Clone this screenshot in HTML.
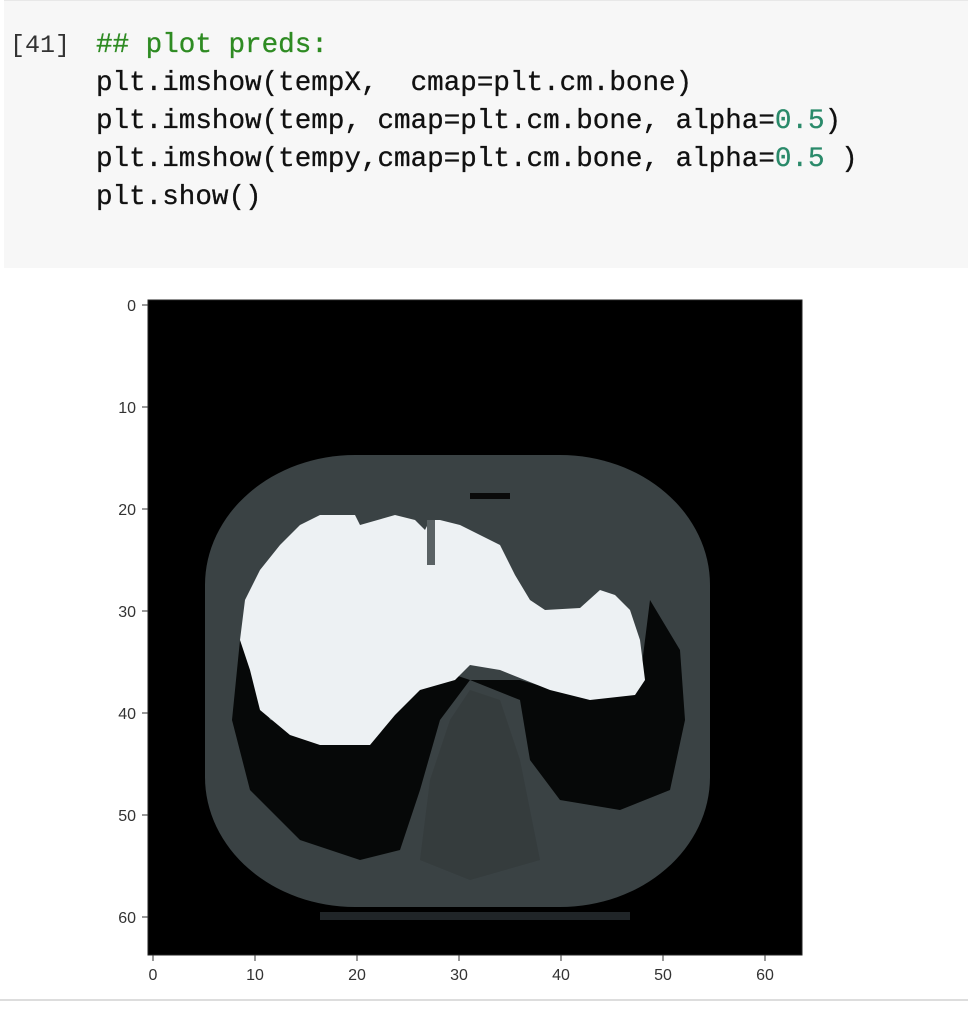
<!DOCTYPE html>
<html><head><style>
body{margin:0;width:968px;height:1014px;background:#fff;position:relative;overflow:hidden;font-family:"Liberation Mono",monospace}
.cell{position:absolute;left:4px;top:0;width:964px;height:267px;background:#f7f7f7;border-top:1px solid #e8e8e8}
.code{position:absolute;left:96px;top:27px;font-size:27.6px;line-height:38px;color:#111;white-space:pre;-webkit-text-stroke:0.3px #111}
.num{position:absolute;left:10px;top:27px;font-size:25px;line-height:38px;color:#333}
.g{color:#2e8b22;-webkit-text-stroke:0.3px #2e8b22}.n{color:#2a8a6a;-webkit-text-stroke:0.3px #2a8a6a}
.sep{position:absolute;left:0;top:999px;width:968px;height:2px;background:#ddd}
</style></head><body>
<div class="cell"></div>
<div class="num">[41]</div>
<div class="code"><span class="g">## plot preds:</span>
plt.imshow(tempX,  cmap=plt.cm.bone)
plt.imshow(temp, cmap=plt.cm.bone, alpha=<span class="n">0.5</span>)
plt.imshow(tempy,cmap=plt.cm.bone, alpha=<span class="n">0.5</span> )
plt.show()</div>
<svg style="position:absolute;left:0;top:0" width="968" height="1014">
<rect x="148" y="300" width="654" height="655" fill="#000"/>
<rect x="205" y="455" width="505" height="452" rx="150" ry="130" fill="#3a4244"/>
<path d="M240 640 L232 720 L250 790 L300 840 L360 860 L400 850 L420 790 L440 720 L470 680 L440 670 L400 700 L350 730 L270 720 Z" fill="#060808"/>
<path d="M470 680 L520 700 L530 760 L560 800 L620 810 L670 790 L685 720 L680 650 L650 600 L640 680 L590 700 L520 680 Z" fill="#060808"/>
<path d="M470 690 L500 700 L520 760 L540 860 L470 880 L420 860 L430 780 L450 720 Z" fill="#353c3d"/>
<path d="M320 515 L355 515 L360 525 L395 515 L415 520 L425 530 L430 520 L440 520 L460 525 L480 535 L500 545 L515 575 L530 600 L545 610 L580 608 L600 590 L615 595 L630 610 L640 640 L645 680 L635 695 L590 700 L550 690 L500 670 L470 665 L455 680 L420 690 L395 715 L370 745 L320 745 L290 735 L260 710 L250 670 L240 640 L245 600 L260 570 L280 545 L300 525 Z" fill="#edf1f3"/>
<rect x="427" y="520" width="8" height="45" fill="#5a6264"/>
<rect x="470" y="493" width="40" height="6" fill="#0a0a0a"/>
<rect x="320" y="912" width="310" height="8" fill="#202528"/>
<rect x="148" y="300" width="654" height="655" fill="none" stroke="#222" stroke-width="1"/>
<g stroke="#333" stroke-width="1">
<line x1="142" y1="305" x2="148" y2="305"/><line x1="142" y1="407" x2="148" y2="407"/><line x1="142" y1="509" x2="148" y2="509"/><line x1="142" y1="611" x2="148" y2="611"/><line x1="142" y1="713" x2="148" y2="713"/><line x1="142" y1="815" x2="148" y2="815"/><line x1="142" y1="917" x2="148" y2="917"/>
<line x1="153" y1="955" x2="153" y2="961"/><line x1="255" y1="955" x2="255" y2="961"/><line x1="357" y1="955" x2="357" y2="961"/><line x1="459" y1="955" x2="459" y2="961"/><line x1="561" y1="955" x2="561" y2="961"/><line x1="663" y1="955" x2="663" y2="961"/><line x1="765" y1="955" x2="765" y2="961"/>
</g>
<g font-family="Liberation Sans Narrow, Liberation Sans, sans-serif" font-size="16" fill="#333" text-anchor="end">
<text x="136" y="311">0</text><text x="136" y="413">10</text><text x="136" y="515">20</text><text x="136" y="617">30</text><text x="136" y="719">40</text><text x="136" y="821">50</text><text x="136" y="923">60</text>
</g>
<g font-family="Liberation Sans Narrow, Liberation Sans, sans-serif" font-size="16" fill="#333" text-anchor="middle">
<text x="153" y="980">0</text><text x="255" y="980">10</text><text x="357" y="980">20</text><text x="459" y="980">30</text><text x="561" y="980">40</text><text x="663" y="980">50</text><text x="765" y="980">60</text>
</g>
</svg>
<div class="sep"></div>
</body></html>
